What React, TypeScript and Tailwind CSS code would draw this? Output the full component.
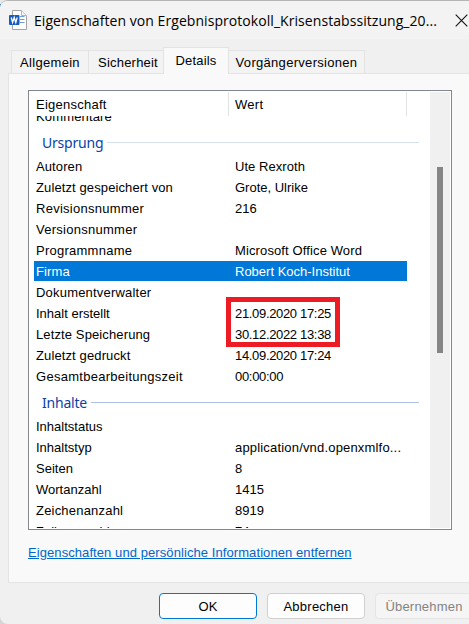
import type { ReactNode } from "react";

type RowData = { name: string; value?: string; selected?: boolean; nameCls?: string; valueCls?: string };

const origin: RowData[] = [
  { name: "Autoren", value: "Ute Rexroth", nameCls: "tracking-[0.1px]", valueCls: "tracking-[0.05px]" },
  { name: "Zuletzt gespeichert von", value: "Grote, Ulrike", nameCls: "tracking-[0.11px]" },
  { name: "Revisionsnummer", value: "216", nameCls: "tracking-[0.27px]" },
  { name: "Versionsnummer", nameCls: "tracking-[0.27px]" },
  { name: "Programmname", value: "Microsoft Office Word", nameCls: "tracking-[0.25px]", valueCls: "tracking-[0.12px]" },
  { name: "Firma", value: "Robert Koch-Institut", selected: true, nameCls: "tracking-[0.1px]" },
  { name: "Dokumentverwalter", nameCls: "tracking-[0.2px]" },
  { name: "Inhalt erstellt", value: "21.09.2020 17:25", valueCls: "tracking-[-0.33px]" },
  { name: "Letzte Speicherung", value: "30.12.2022 13:38", nameCls: "tracking-[0.12px]", valueCls: "tracking-[-0.33px]" },
  { name: "Zuletzt gedruckt", value: "14.09.2020 17:24", nameCls: "tracking-[0.12px]", valueCls: "tracking-[-0.33px]" },
  { name: "Gesamtbearbeitungszeit", value: "00:00:00", nameCls: "tracking-[0.27px]", valueCls: "tracking-[-0.3px]" },
];

const contents: RowData[] = [
  { name: "Inhaltstatus" },
  { name: "Inhaltstyp", value: "application/vnd.openxmlfo...", valueCls: "tracking-[0.18px]" },
  { name: "Seiten", value: "8" },
  { name: "Wortanzahl", value: "1415" },
  { name: "Zeichenanzahl", value: "8919", nameCls: "tracking-[0.2px]" },
  { name: "Zeilenanzahl", value: "74" },
];

function Row({ name, value, selected, nameCls = "", valueCls = "" }: RowData) {
  return (
    <div className="h-[21px] pl-[5px]">
      <div className={`flex h-5 w-[373px] items-center pt-[2px] whitespace-nowrap ${selected ? "bg-[#0078d7] text-white" : ""}`}>
        <div className="w-[199px] pl-[2px]"><span className={nameCls}>{name}</span></div>
        <div className="pl-[2px]"><span className={valueCls}>{value}</span></div>
      </div>
    </div>
  );
}

function Group({ title, line }: { title: string; line: string }) {
  return (
    <div className="flex h-[29px] items-center gap-1 pr-[11px] pl-[13px]">
      <span className="pt-[2px] font-['Noto_Sans','Open_Sans',sans-serif] text-[14px] leading-[20px] tracking-[-0.2px] text-[#0b3fa5]">{title}</span>
      <div className={`mt-px h-px flex-1 ${line}`} />
    </div>
  );
}

function Tab({ children, cls }: { children: ReactNode; cls: string }) {
  return (
    <div className={`flex items-center justify-center border border-b-0 border-[#e3e3e3] whitespace-nowrap ${cls}`}>
      {children}
    </div>
  );
}

function WordIcon() {
  return (
    <svg width="18" height="20" viewBox="0 0 18 20" className="shrink-0">
      <path d="M3.500.5h9l5 5v14h-14z" fill="#fff" stroke="#a3a3a3" />
      <path d="M12.500.5v5h5" fill="#f2f2f2" stroke="#b5b5b5" />
      <path d="M11 6.500h4.500M11 9.500h4.500M11 12.500h4.500" stroke="#6d9edb" />
      <rect y="5" width="10.500" height="10" rx="1" fill="#185abd" />
      <path d="M2.200 7.500l1.400 5 1.600-5 1.600 5 1.400-5" fill="none" stroke="#fff" strokeWidth="1.300" />
    </svg>
  );
}

export default function App() {
  return (
    <div className="h-[624px] w-[469px] overflow-hidden bg-[linear-gradient(#e9e9e9_0_4px,#1879c9_4px_12px,#d5d5d5_12px)] font-['Liberation_Sans',Arial,sans-serif] text-[13px] text-black">
      <div className="flex h-[624px] w-[480px] flex-col overflow-hidden rounded-l-[8px] border-t border-[#b5b5b5] bg-[#f0f0f0]">
        <header className="flex h-[38px] shrink-0 items-center bg-[#f3f3f3] pl-[9px]">
          <WordIcon />
          <h1 className="ml-[7px] w-[416px] font-['Open_Sans','Noto_Sans',sans-serif] text-[14px] tracking-[0.06px] whitespace-nowrap">
            Eigenschaften von Ergebnisprotokoll_Krisenstabssitzung_20...
          </h1>
          <svg width="13" height="13" viewBox="0 0 13 13" className="ml-[5px] shrink-0">
            <path d="M.7.7l11.600 11.600M12.300.7L.7 12.300" stroke="#111" strokeWidth="1.100" />
          </svg>
        </header>

        <nav className="flex h-[34px] shrink-0 items-end pl-[11px]">
          <Tab cls="h-[23px] w-[78px] bg-[#f3f3f3] pt-[2px] tracking-[0.3px]">Allgemein</Tab>
          <Tab cls="h-[23px] w-[74px] border-x-0 bg-[#f3f3f3] pt-[2px] pl-[4px] tracking-[0.2px]">Sicherheit</Tab>
          <Tab cls="z-10 -mb-px h-[27px] w-[66px] bg-[#f9f9f9] tracking-[0.2px]">Details</Tab>
          <Tab cls="h-[23px] w-[136px] border-l-0 bg-[#f3f3f3] pt-[2px] tracking-[0.3px]">Vorgängerversionen</Tab>
        </nav>

        <main className="ml-2 h-[510px] shrink-0 border border-[#e3e3e3] bg-[#f9f9f9] pt-4 pl-[19px]">
          <section className="flex h-[440px] w-[424px] border border-[#828790] bg-white">
            <div className="flex w-[401px] flex-col">
              <div className="flex h-[25px] shrink-0 items-center pt-[1px]">
                <div className="flex h-full w-[200px] items-center border-r border-[#e3e3e3] pt-[2px] pl-[7px] tracking-[0.25px]">Eigenschaft</div>
                <div className="flex h-full w-[178px] items-center border-r border-[#e3e3e3] pt-[2px] pl-[6px] tracking-[0.3px]">Wert</div>
              </div>
              <div className="relative h-[412px] overflow-hidden">
                <div className="-mt-[10px]">
                  <Row name="Kommentare" nameCls="tracking-[0.15px]" />
                  <Group title="Ursprung" line="bg-[#d5dff0]" />
                  {origin.map((r) => <Row key={r.name} {...r} />)}
                  <Group title="Inhalte" line="bg-[#b0c0e2]" />
                  {contents.map((r) => <Row key={r.name} {...r} />)}
                </div>
                <div className="absolute top-[181px] left-[197px] h-[50px] w-[114px] border-[5px] border-[#ed1c24]" />
              </div>
            </div>
            <div className="mt-px h-[436px] w-5 bg-[#f0f0f0] pt-[75px] pl-[7px]">
              <div className="h-[186px] w-[6px] bg-[#858585]" />
            </div>
          </section>
          <a className="mt-[13px] block w-[324px] whitespace-nowrap text-[#0066cc] tracking-[0.08px] underline underline-offset-1">
            Eigenschaften und persönliche Informationen entfernen
          </a>
        </main>

        <footer className="flex gap-[10px] pt-[10px] pl-[159px]">
          <button className="h-[26px] w-[98px] shrink-0 rounded-[4px] border border-[#0078d4] bg-[#fdfdfd] pt-px">OK</button>
          <button className="h-[26px] w-[98px] shrink-0 rounded-[4px] border border-[#d0d0d0] bg-[#fdfdfd] pt-px tracking-[0.25px]">Abbrechen</button>
          <button className="h-[26px] w-[98px] shrink-0 rounded-[4px] border border-[#e5e5e5] bg-[#f5f5f5] pt-px tracking-[0.2px] text-[#838383]">Übernehmen</button>
        </footer>
      </div>
    </div>
  );
}
